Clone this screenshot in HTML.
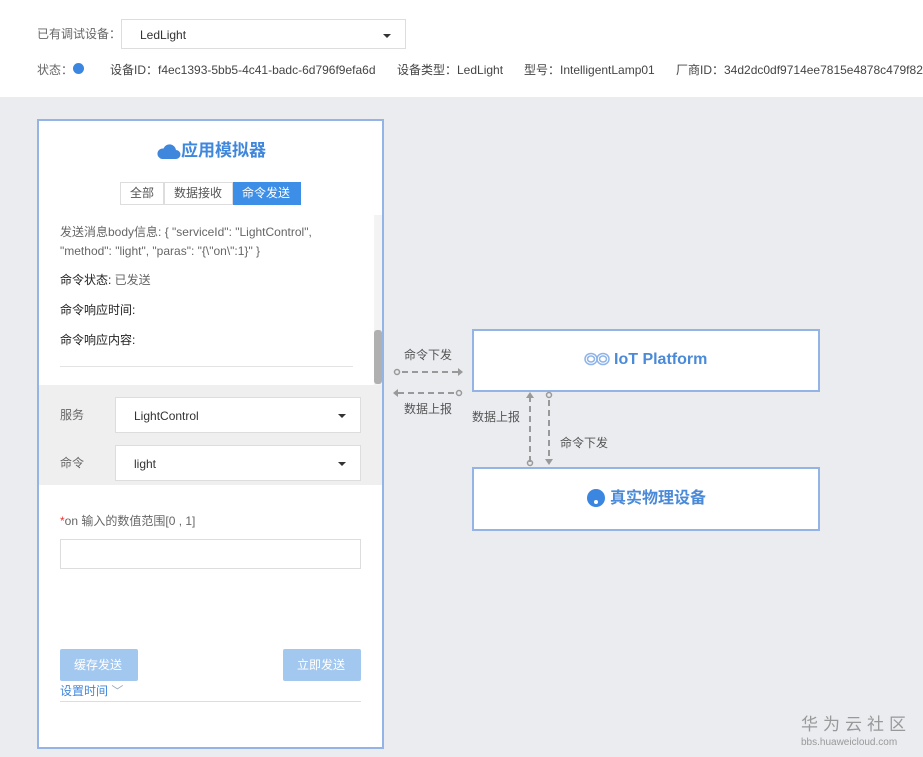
<!DOCTYPE html>
<html><head><meta charset="utf-8"><style>
*{margin:0;padding:0;box-sizing:border-box}
body{width:923px;height:757px;overflow:hidden;background:#eaecf0;font-family:"Liberation Sans","Noto Sans CJK SC",sans-serif;font-size:12px;color:#555;position:relative}
.a{position:absolute}
.top{left:0;top:0;width:923px;height:97px;background:#fff}
.sel{background:#fff;border:1px solid #ddd}
.tri{position:absolute;width:0;height:0;border-left:4px solid transparent;border-right:4px solid transparent;border-top:4px solid #333}
.box{background:#fff;border:2px solid #93b4e4}
.t{white-space:nowrap;line-height:1.2}
</style></head><body>
<div class="a top"></div>
<div class="a t" style="left:37px;top:27px;color:#666">已有调试设备：</div>
<div class="a sel" style="left:121px;top:19px;width:285px;height:30px"><span class="a t" style="left:18px;top:8px;color:#333">LedLight</span><div class="tri" style="left:261px;top:14px"></div></div>
<div class="a t" style="left:37px;top:63px;color:#666">状态：</div>
<div class="a" style="left:73px;top:63px;width:11px;height:11px;border-radius:50%;background:#3a86e0"></div>
<div class="a t" style="left:110px;top:63px;color:#444">设备ID：f4ec1393-5bb5-4c41-badc-6d796f9efa6d</div>
<div class="a t" style="left:397px;top:63px;color:#444">设备类型：LedLight</div>
<div class="a t" style="left:524px;top:63px;color:#444">型号：IntelligentLamp01</div>
<div class="a t" style="left:676px;top:63px;color:#444">厂商ID：34d2dc0df9714ee7815e4878c479f82</div>

<div class="a box" style="left:37px;top:119px;width:347px;height:630px;border-width:2px"></div>
<div class="a" style="left:39px;top:385px;width:343px;height:100px;background:#efefef"></div>
<div class="a" style="left:374px;top:215px;width:8px;height:170px;background:#f3f3f3"></div>
<div class="a" style="left:374px;top:330px;width:8px;height:54px;background:#b0b0b0;border-radius:3px"></div>
<svg class="a" style="left:157px;top:141px" width="24" height="20" viewBox="0 0 24 20"><path d="M5 18h14a4.5 4.5 0 0 0 0-9 6.5 6.5 0 0 0-12.5-1.5A5.2 5.2 0 0 0 5 18z" fill="#3f87dc"/></svg>
<div class="a t" style="left:181px;top:141px;font-size:17px;font-weight:bold;color:#3f87dc">应用模拟器</div>
<div class="a" style="left:120px;top:182px;width:44px;height:23px;border:1px solid #ddd;background:#fff"><span class="a t" style="left:9px;top:3px;color:#555">全部</span></div>
<div class="a" style="left:164px;top:182px;width:69px;height:23px;border:1px solid #ddd;background:#fff"><span class="a t" style="left:9px;top:3px;color:#555">数据接收</span></div>
<div class="a" style="left:233px;top:182px;width:68px;height:23px;background:#3d8ee6"><span class="a t" style="left:9px;top:4px;color:#fff">命令发送</span></div>
<div class="a" style="left:60px;top:223px;width:300px;line-height:19px;color:#666">发送消息body信息: { "serviceId": "LightControl", "method": "light", "paras": "{\"on\":1}" }</div>
<div class="a t" style="left:60px;top:273px;color:#222">命令状态: <span style="color:#666">已发送</span></div>
<div class="a t" style="left:60px;top:303px;color:#222">命令响应时间:</div>
<div class="a t" style="left:60px;top:333px;color:#222">命令响应内容:</div>
<div class="a" style="left:60px;top:366px;width:293px;height:1px;background:#e3e3e3"></div>
<div class="a t" style="left:60px;top:408px;color:#666">服务</div>
<div class="a sel" style="left:115px;top:397px;width:246px;height:36px"><span class="a t" style="left:18px;top:11px;color:#333">LightControl</span><div class="tri" style="left:222px;top:16px"></div></div>
<div class="a t" style="left:60px;top:456px;color:#666">命令</div>
<div class="a sel" style="left:115px;top:445px;width:246px;height:36px"><span class="a t" style="left:18px;top:11px;color:#333">light</span><div class="tri" style="left:222px;top:16px"></div></div>
<div class="a t" style="left:60px;top:514px;color:#666"><span style="color:#e33">*</span>on 输入的数值范围[0 , 1]</div>
<div class="a sel" style="left:60px;top:539px;width:301px;height:30px"></div>
<div class="a" style="left:60px;top:649px;width:78px;height:32px;background:#a3c8f0;border-radius:2px"><span class="a t" style="left:14px;top:9px;color:#fff">缓存发送</span></div>
<div class="a" style="left:283px;top:649px;width:78px;height:32px;background:#a3c8f0;border-radius:2px"><span class="a t" style="left:14px;top:9px;color:#fff">立即发送</span></div>
<div class="a t" style="left:60px;top:684px;color:#3f87dc">设置时间 <span style="color:#9ab">﹀</span></div>
<div class="a" style="left:60px;top:701px;width:301px;height:1px;background:#ddd"></div>

<div class="a box" style="left:472px;top:329px;width:348px;height:63px"></div>
<svg class="a" style="left:584px;top:352px" width="26" height="14" viewBox="0 0 26 14" fill="none" stroke="#8fb4e8" stroke-width="1.5"><ellipse cx="7" cy="7" rx="6" ry="5.5"/><ellipse cx="19" cy="7" rx="6" ry="5.5"/><ellipse cx="7" cy="7" rx="3.5" ry="3"/><ellipse cx="19" cy="7" rx="3.5" ry="3"/></svg>
<div class="a t" style="left:614px;top:350px;font-size:16px;font-weight:bold;color:#4a8ad8">IoT Platform</div>
<div class="a box" style="left:472px;top:467px;width:348px;height:64px"></div>
<div class="a" style="left:587px;top:489px;width:18px;height:18px;border-radius:50%;background:#3a86e0"></div>
<div class="a" style="left:594px;top:500px;width:4px;height:4px;border-radius:50%;background:#fff"></div>
<div class="a t" style="left:610px;top:489px;font-size:16px;font-weight:bold;color:#4a8ad8">真实物理设备</div>

<svg class="a" style="left:380px;top:320px" width="200" height="150" viewBox="0 0 200 150" fill="none" stroke="#999" stroke-width="2">
<circle cx="17" cy="52" r="2.5" stroke-width="1.5"/><path d="M22 52H78" stroke-dasharray="6 4"/><path d="M78 48l5 4-5 4z" fill="#999" stroke="none"/>
<circle cx="79" cy="73" r="2.5" stroke-width="1.5"/><path d="M74 73H18" stroke-dasharray="6 4"/><path d="M18 69l-5 4 5 4z" fill="#999" stroke="none"/>
<path d="M150 142V78" stroke-dasharray="6 4"/><path d="M146 78l4-6 4 6z" fill="#999" stroke="none"/><circle cx="150" cy="143" r="2.5" stroke-width="1.5"/>
<circle cx="169" cy="75" r="2.5" stroke-width="1.5"/><path d="M169 80V140" stroke-dasharray="6 4"/><path d="M165 139l4 6 4-6z" fill="#999" stroke="none"/>
</svg>
<div class="a t" style="left:404px;top:348px;color:#555">命令下发</div>
<div class="a t" style="left:404px;top:402px;color:#555">数据上报</div>
<div class="a t" style="left:472px;top:410px;color:#555">数据上报</div>
<div class="a t" style="left:560px;top:436px;color:#555">命令下发</div>
<div class="a" style="left:801px;top:716px;font-size:17px;line-height:18px;color:#999;letter-spacing:5px;white-space:nowrap">华为云社区</div>
<div class="a" style="left:801px;top:737px;font-size:10px;line-height:11px;color:#999;white-space:nowrap">bbs.huaweicloud.com</div>
</body></html>
